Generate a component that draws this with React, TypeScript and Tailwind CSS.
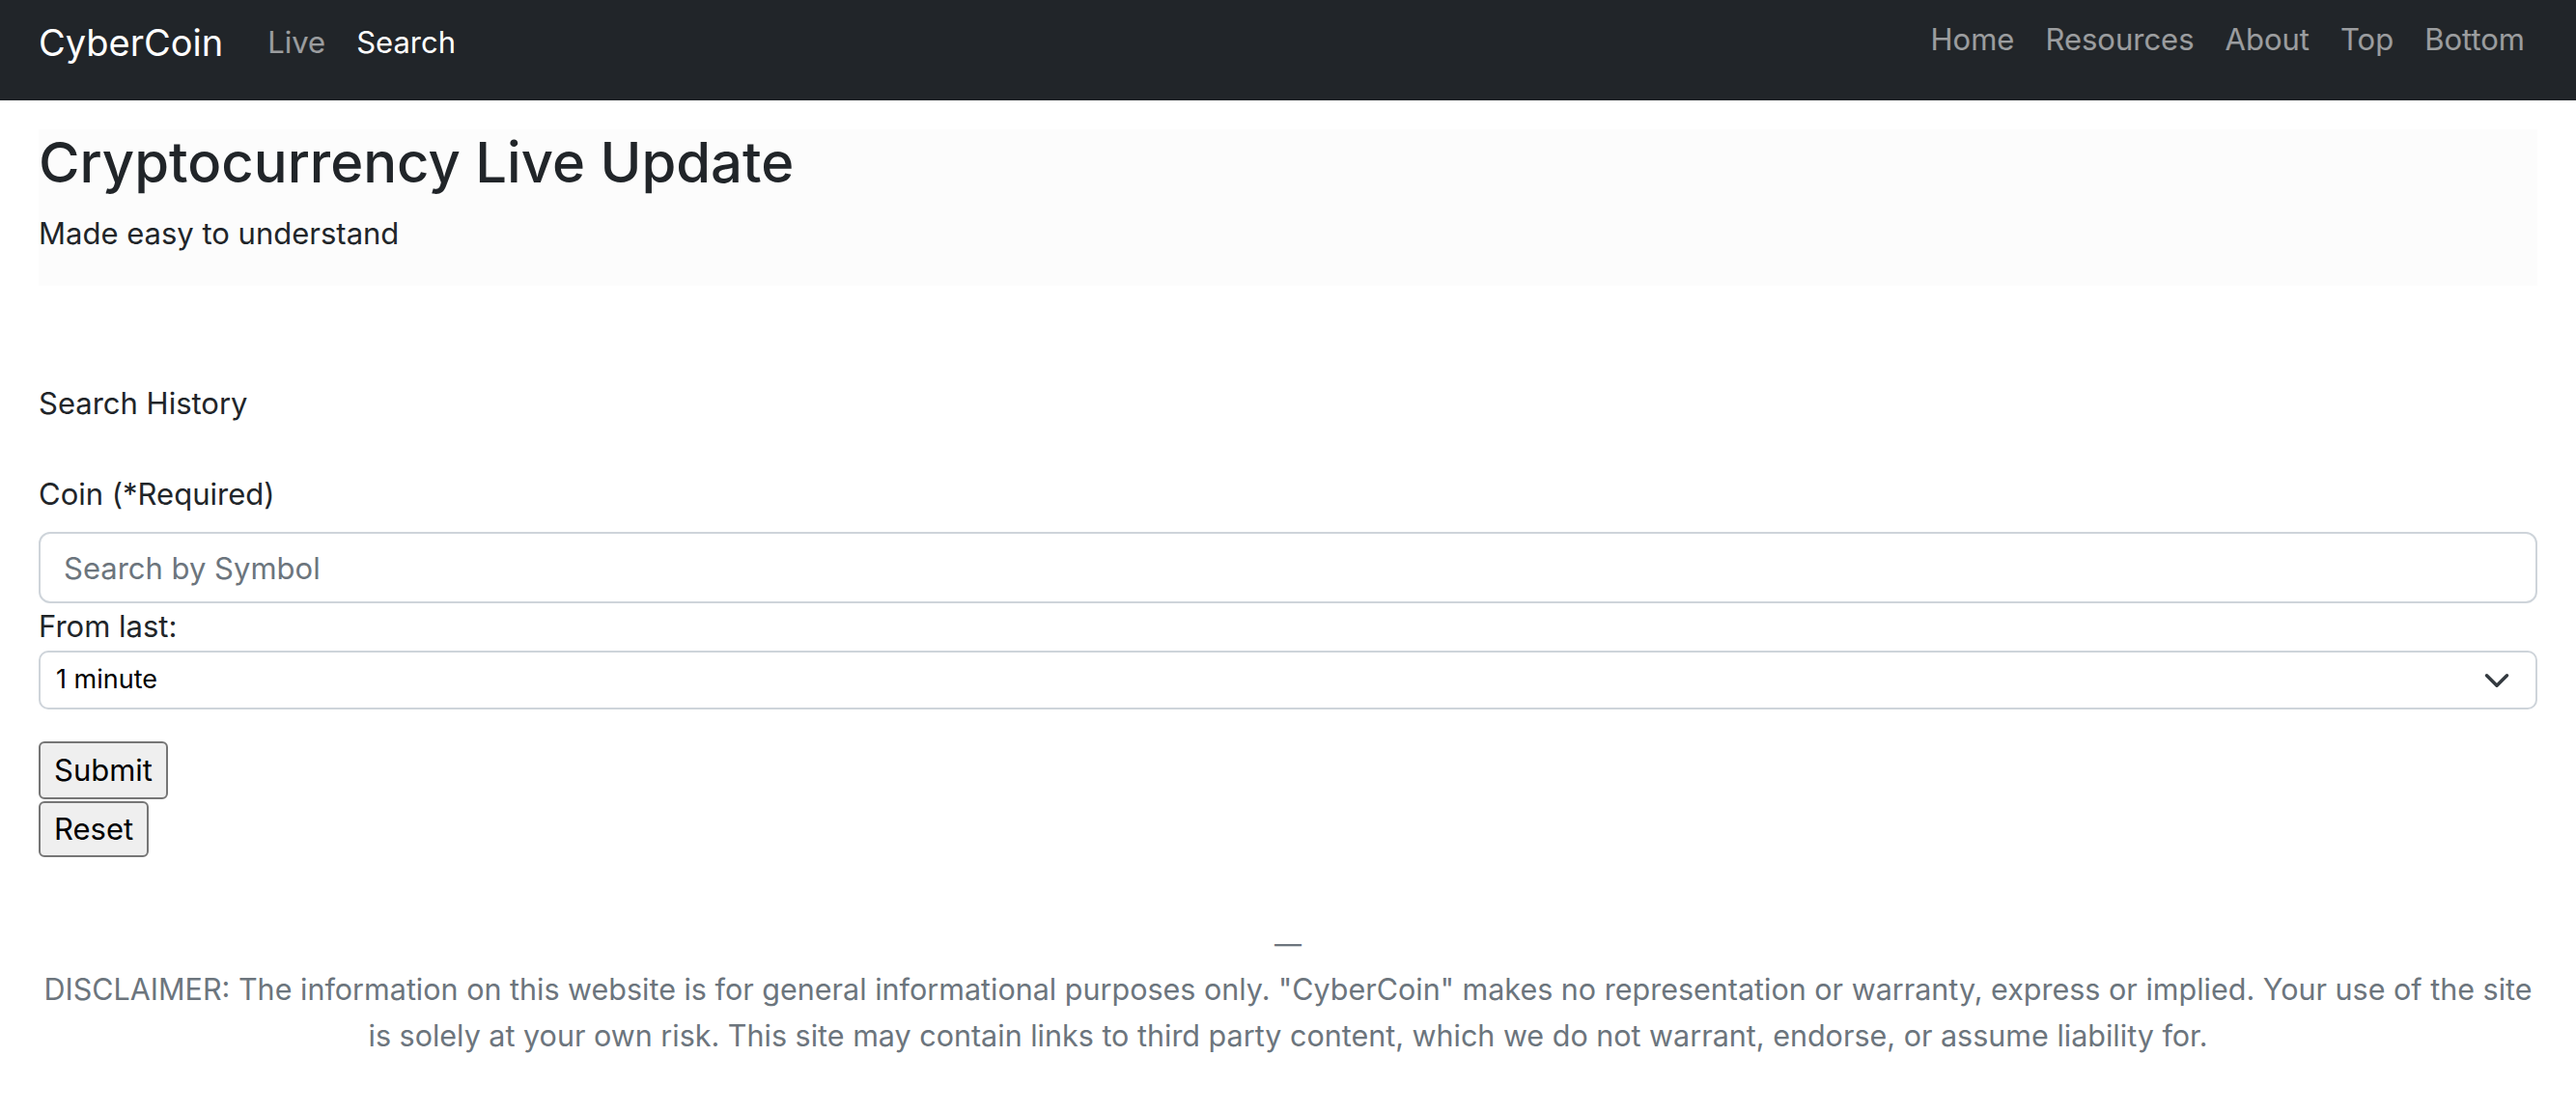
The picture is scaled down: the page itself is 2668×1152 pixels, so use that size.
import React from 'react';

const font = { fontFamily: 'Inter, "Liberation Sans", Arial, sans-serif' };

function NavBar() {
  return (
    <nav className="flex h-[104px] items-start justify-between bg-[#212529] pl-[40px] pr-[37px]">
      <div className="flex items-start pt-[14px]">
        <a className="text-[38px] leading-[60px] text-white">CyberCoin</a>
        <div className="ml-[30px] flex pt-[6px]">
          <a className="px-[16px] text-[31px] leading-[48px] text-white/55">Live</a>
          <a className="px-[16px] text-[31px] leading-[48px] text-white">Search</a>
        </div>
      </div>
      <div className="flex pt-[17px]">
        {['Home', 'Resources', 'About', 'Top', 'Bottom'].map((l) => (
          <a key={l} className="px-[16px] text-[31px] leading-[48px] text-white/55">
            {l}
          </a>
        ))}
      </div>
    </nav>
  );
}

export default function App() {
  return (
    <div className="min-h-screen bg-white text-[#212529]" style={font}>
      <NavBar />
      <div className="px-[40px]">
        <div className="mt-[30px] h-[162px] bg-[#fcfcfc]">
          <h1 className="text-[58px] font-medium leading-[1.2]">Cryptocurrency Live Update</h1>
          <p className="mt-[14px] text-[31px] leading-[48px]">Made easy to understand</p>
        </div>

        <p className="mt-[98px] text-[31px] leading-[48px]">Search History</p>

        <form className="mt-[46px]">
          <label className="block text-[31px] leading-[48px]">Coin (*Required)</label>
          <input
            type="text"
            placeholder="Search by Symbol"
            className="mt-[15px] block h-[74px] w-full rounded-[12px] border-2 border-[#ced4da] bg-white px-[24px] text-[31px] outline-none placeholder:text-[#6c757d]"
          />
          <label className="block text-[31px] leading-[48px]">From last:</label>
          <div className="relative mt-px">
            <select className="block h-[61px] w-full appearance-none rounded-[10px] border-2 border-[#ced4da] bg-white pl-[16px] text-[27px] text-black outline-none">
              <option>1 minute</option>
              <option>5 minutes</option>
              <option>1 hour</option>
            </select>
            <svg
              className="pointer-events-none absolute right-[28px] top-1/2 -translate-y-1/2"
              width="28"
              height="28"
              viewBox="0 0 16 16"
            >
              <path d="m2 5 6 6 6-6" fill="none" stroke="#343a40" strokeWidth="2" strokeLinecap="round" strokeLinejoin="round" />
            </svg>
          </div>
          <div className="mt-[33px] flex flex-col items-start gap-[2px]">
            <button
              type="button"
              className="h-[60px] rounded-[6px] border-2 border-[#767676] bg-[#efefef] px-[14px] text-[31px] text-black"
            >
              Submit
            </button>
            <button
              type="button"
              className="h-[58px] rounded-[6px] border-2 border-[#767676] bg-[#efefef] px-[14px] text-[31px] text-black"
            >
              Reset
            </button>
          </div>
        </form>

        <footer className="mt-[70px] pb-[40px] text-center text-[#6c757d]">
          <div className="text-[28px] leading-[40px]">—</div>
          <p className="mt-[3px] text-[30.5px] leading-[48px]">
            DISCLAIMER: The information on this website is for general informational purposes only.
            "CyberCoin" makes no representation or warranty, express or implied. Your use of the site
            <br />
            is solely at your own risk. This site may contain links to third party content, which we
            do not warrant, endorse, or assume liability for.
          </p>
        </footer>
      </div>
    </div>
  );
}
